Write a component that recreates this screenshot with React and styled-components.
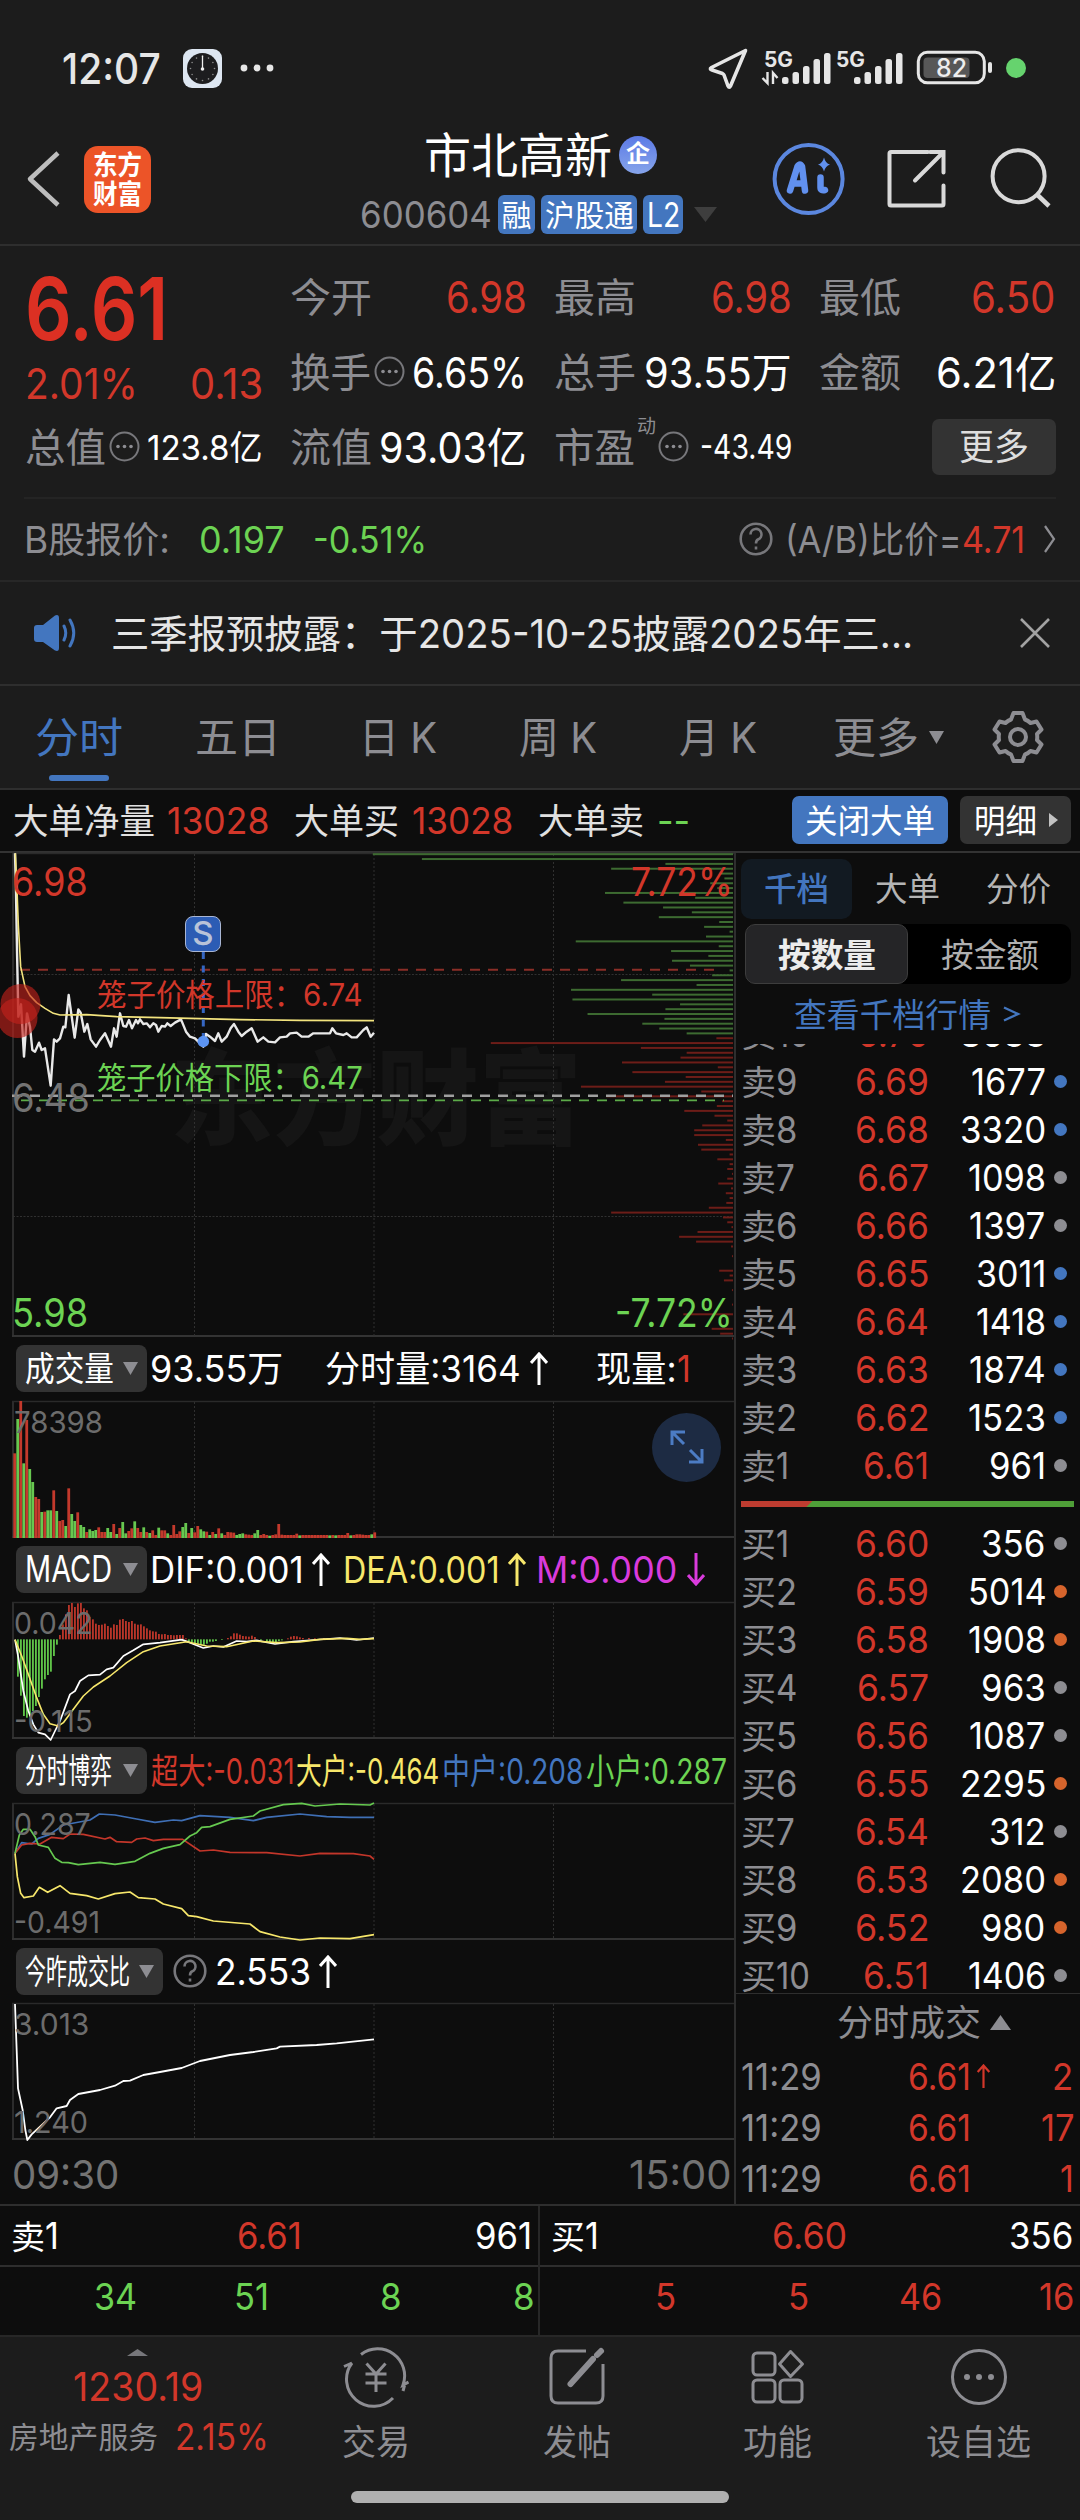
import React, { useLayoutEffect, useRef, useState } from "react";
import styled, { createGlobalStyle } from "styled-components";

const RED = "#d2372a";
const GREEN = "#6cd353";
const BLUE = "#4376bf";
const GREY = "#8d8d92";
const YELLOW = "#f7e76b";
const MAGENTA = "#d93bdc";
const PANEL = "#1c1c1c";
const LINE = "#2e2e2e";

const Global = createGlobalStyle`
  html, body { margin: 0; background: #0d0d0d; }
  * { box-sizing: border-box; }
  #root { font-family: Inter, "Noto Sans CJK SC", sans-serif; }
`;

/* ---------- text fitted to a fixed width ---------- */
const FitBox = styled.span`
  display: inline-block;
  flex: none;
  width: ${(p) => p.$w}px;
  white-space: pre;
  color: ${(p) => p.$c || "inherit"};
  font-size: ${(p) => (p.$s ? p.$s + "px" : "inherit")};
  font-weight: ${(p) => p.$b || "inherit"};
`;
const FitInner = styled.span`
  display: inline-block;
  transform-origin: 0 50%;
`;
const LATIN = /^[\x20-\x7f]+$/;
function Fit({ w, c, s, b, children }) {
  const ref = useRef(null);
  const [k, setK] = useState(1);
  useLayoutEffect(() => {
    if (ref.current && ref.current.offsetWidth) setK(w / ref.current.offsetWidth);
  }, [w, children]);
  const size = s && LATIN.test(children) ? s * 0.98 : s;
  return (
    <FitBox $w={w} $c={c} $s={size} $b={b}>
      <FitInner ref={ref} style={{ transform: `translateY(0.7px) scaleX(${k})` }}>{children}</FitInner>
    </FitBox>
  );
}

const ADVANCE = { 1: 0.36, 7: 0.52, ".": 0.25, ":": 0.26 };
const numWidth = (t, size) =>
  [...String(t)].reduce((a, ch) => a + (ADVANCE[ch] || 0.567) * size, 0);
const Num = ({ size, c, children }) => (
  <Fit w={numWidth(children, size)} s={size} c={c}>{children}</Fit>
);

/* ---------- page ---------- */
const Page = styled.div`
  width: 1080px;
  height: 2520px;
  background: #0d0d0d;
  color: #fff;
  display: flex;
  flex-direction: column;
  overflow: hidden;
  line-height: 1.1;
`;

/* ---------- status bar ---------- */
const Status = styled.div`
  height: 120px;
  padding: 17px 53px 0 62px;
  background: ${PANEL};
  display: flex;
  align-items: center;
  color: #e6e6e6;
`;
const StatusIcons = styled.svg`
  margin-left: auto;
  display: block;
`;
const ClockIcon = styled.svg`
  margin-left: 22px;
`;
const MoreDots = styled.svg`
  margin-left: 17px;
`;

/* ---------- header ---------- */
const Header = styled.header`
  height: 127px;
  background: ${PANEL};
  border-bottom: 2px solid ${LINE};
  display: flex;
`;
const HeaderLeft = styled.div`
  width: 360px;
  display: flex;
  align-items: center;
  padding: 0 0 6px 26px;
  gap: 22px;
`;
const Logo = styled.div`
  width: 67px;
  height: 67px;
  border-radius: 14px;
  background: #ec5428;
  font-weight: 700;
  line-height: 29px;
  font-size: 27px;
  display: flex;
  flex-direction: column;
  align-items: center;
  justify-content: center;
`;
const HeaderMid = styled.div`
  width: 410px;
  display: flex;
  flex-direction: column;
`;
const TitleRow = styled.div`
  height: 71px;
  padding-left: 64px;
  display: flex;
  align-items: center;
  gap: 7px;
  font-size: 48px;
`;
const Qi = styled.span`
  width: 38px;
  height: 38px;
  border-radius: 50%;
  background: linear-gradient(#5c7ae6, #86a4ea);
  font-size: 24px;
  font-weight: 700;
  line-height: 36px;
  text-align: center;
`;
const CodeRow = styled.div`
  height: 47px;
  display: flex;
  align-items: center;
  gap: 6px;
  font-size: 37px;
  color: ${GREY};
`;
const Badge = styled.span`
  height: 39px;
  border-radius: 6px;
  background: ${BLUE};
  color: #fff;
  font-size: 30px;
  line-height: 38px;
  padding: 0 3.5px;
`;
const HeaderRight = styled.div`
  display: flex;
  align-items: center;
  padding-bottom: 6px;
`;

/* ---------- quote ---------- */
const Quote = styled.section`
  height: 251px;
  background: ${PANEL};
  padding: 13px 24px 0 25px;
`;
const QuoteGrid = styled.div`
  display: grid;
  grid-template-columns: repeat(4, 237.5px);
  grid-template-rows: repeat(3, 75px);
  column-gap: 27px;
`;
const PriceBlock = styled.div`
  grid-row: span 2;
  display: flex;
  flex-direction: column;
  padding-top: 12px;
`;
const BigPrice = styled.div`
  height: 73px;
  line-height: 73px;
  font-weight: 500;
  color: #dc3023;
`;
const Spread = styled.div`
  display: flex;
  align-items: center;
  justify-content: space-between;
  height: 78px;
  flex: none;
`;
const Cell = styled.div`
  display: flex;
  align-items: center;
  justify-content: space-between;
  height: 75px;
`;
const CellLabel = styled.span`
  display: flex;
  align-items: center;
  gap: 3px;
  color: ${GREY};
`;
const Sup = styled.sup`
  font-size: 19px;
  align-self: flex-start;
  margin: -8px -1px 0 -1px;
  line-height: 20px;
`;
const MoreButton = styled.div`
  margin-left: auto;
  width: 124px;
  height: 56px;
  border-radius: 7px;
  background: #333;
  color: #dedede;
  display: flex;
  align-items: center;
  justify-content: center;
`;
const BRow = styled.section`
  height: 84px;
  margin: 0;
  padding: 0 24px 0 24px;
  background: ${PANEL};
  border-bottom: 2px solid #272727;
  display: flex;
  align-items: center;
  color: ${GREY};
`;
const QuoteRule = styled.div`
  height: 2px;
  flex: none;
  background: linear-gradient(90deg, ${PANEL} 24px, #242424 24px, #242424 1056px, ${PANEL} 1056px);
`;
const Push = styled.span`
  margin-left: ${(p) => (p.$x === undefined ? "auto" : p.$x + "px")};
  display: inline-flex;
  align-items: center;
`;

/* ---------- news ---------- */
const News = styled.section`
  height: 104px;
  background: ${PANEL};
  border-bottom: 2px solid ${LINE};
  display: flex;
  align-items: center;
  padding: 0 30px 0 33px;
  color: #e6e6e6;
`;

/* ---------- tabs ---------- */
const Tabs = styled.nav`
  height: 104px;
  background: ${PANEL};
  border-bottom: 2px solid ${LINE};
  display: flex;
  color: ${GREY};
`;
const Tab = styled.div`
  width: 160px;
  display: flex;
  flex-direction: column;
  align-items: center;
  padding-top: 28px;
  color: ${(p) => (p.$on ? BLUE : GREY)};
  &:first-child {
    width: 158px;
  }
  &::after {
    content: "";
    margin-top: 15px;
    width: 60px;
    height: 6px;
    border-radius: 3px;
    background: ${(p) => (p.$on ? BLUE : "transparent")};
  }
`;
const MoreTab = styled.div`
  margin-left: 35px;
  width: 152px;
  display: flex;
  gap: 10px;
  padding-top: 27px;
  height: 76px;
  align-items: center;
`;
const GearBox = styled.div`
  padding-top: 24px;
  margin-left: 6px;
`;

/* ---------- big orders ---------- */
const Orders = styled.div`
  height: 63px;
  display: flex;
  align-items: center;
  padding: 0 9px 0 13px;
  border-bottom: 2px solid #333;
  color: #e0e0e0;
`;
const Pill = styled.div`
  height: 48px;
  width: ${(p) => p.$w}px;
  background: ${(p) => (p.$blue ? BLUE : "#333")};
  border-radius: 7px;
  display: flex;
  align-items: center;
  justify-content: center;
  gap: 12px;
  color: #fff;
  margin-left: ${(p) => p.$ml};
`;

/* ---------- main split ---------- */
const Main = styled.div`
  display: flex;
  height: 1353px;
  border-bottom: 2px solid ${LINE};
`;
const Left = styled.div`
  width: 736px;
  border-right: 2px solid ${LINE};
  display: flex;
  flex-direction: column;
`;
const ChartBox = styled.div`
  position: relative;
  height: ${(p) => p.$h}px;
  flex: none;
`;
const ChartSvg = styled.svg`
  position: relative;
  display: block;
  overflow: visible;
`;
const Mark = styled.div`
  position: absolute;
  line-height: 40px;
  height: 40px;
  margin-top: -20px;
  left: ${(p) => p.$x}px;
  top: ${(p) => p.$y}px;
  white-space: nowrap;
`;
const Watermark = styled.div`
  position: absolute;
  left: 170px;
  top: 190px;
  line-height: 110px;
  font-weight: 900;
  color: #151515;
`;
const SellBadge = styled.div`
  position: absolute;
  left: 185px;
  top: 63px;
  width: 36px;
  height: 36px;
  border: 1.5px solid #a9b6d4;
  border-radius: 8px;
  background: #2c5cb4;
  color: #b9c3d8;
  font-size: 33px;
  font-weight: 500;
  line-height: 33px;
  text-align: center;
`;
const ExpandButton = styled.div`
  position: absolute;
  left: 652px;
  top: 12px;
  width: 69px;
  height: 69px;
  border-radius: 50%;
  background: #1d2b43;
  display: flex;
  align-items: center;
  justify-content: center;
`;
const IndicatorRow = styled.div`
  height: ${(p) => p.$h || 64}px;
  padding: 8px 0 0 16px;
  display: flex;
`;
const Picker = styled.div`
  width: ${(p) => p.$w || 131}px;
  height: 47px;
  border-radius: 8px;
  background: #333;
  display: flex;
  align-items: center;
  justify-content: space-between;
  padding: 0 9px;
  font-size: 34px;
`;
const Values = styled.div`
  height: 47px;
  display: flex;
  align-items: center;
  font-size: 36.5px;
`;
const Axis = styled.div`
  flex: 1;
  display: flex;
  justify-content: space-between;
  align-items: center;
  padding: 5px 2px 0 12px;
  color: #737373;
`;

/* ---------- order book ---------- */
const Right = styled.div`
  width: 344px;
  display: flex;
  flex-direction: column;
`;
const BookTabs = styled.div`
  height: 72px;
  padding: 6px 6px 0 5px;
  display: flex;
`;
const BookTab = styled.div`
  width: 111px;
  height: 60px;
  border-radius: 10px;
  display: flex;
  align-items: center;
  justify-content: center;
  color: ${(p) => (p.$on ? BLUE : "#b4b4b4")};
  background: ${(p) => (p.$on ? "#121a22" : "transparent")};
  font-weight: ${(p) => (p.$on ? 500 : 400)};
`;
const Segment = styled.div`
  margin-left: 9px;
  width: 326px;
  height: 60px;
  border-radius: 10px;
  background: #000;
  display: flex;
`;
const SegItem = styled.div`
  width: 163px;
  border-radius: 10px;
  border: 1.5px solid ${(p) => (p.$on ? "#3d3d3d" : "transparent")};
  background: ${(p) => (p.$on ? "#252527" : "transparent")};
  color: ${(p) => (p.$on ? "#ececec" : "#b0b0b0")};
  font-weight: ${(p) => (p.$on ? 700 : 400)};
  display: flex;
  align-items: center;
  justify-content: center;
`;
const BookLink = styled.div`
  height: 60px;
  display: flex;
  align-items: center;
  padding-left: 58px;
  color: ${BLUE};
`;
const BookList = styled.div`
  height: ${(p) => p.$h}px;
  overflow: hidden;
  display: flex;
  flex-direction: column;
  justify-content: ${(p) => (p.$end ? "flex-end" : "flex-start")};
`;
const BookLine = styled.div`
  height: 48px;
  flex: none;
  display: grid;
  grid-template-columns: 80px 108px 117px 22px;
  align-items: center;
  padding-left: 5px;
  color: ${GREY};
`;
const RightCell = styled.span`
  display: flex;
  justify-content: flex-end;
  color: ${(p) => p.$c};
`;
const Dot = styled.i`
  width: 13px;
  height: 13px;
  border-radius: 50%;
  background: ${(p) => p.$c};
  margin-left: 8px;
`;
const RatioBar = styled.div`
  height: 6px;
  margin: 11px 6px 13px 5px;
  background: linear-gradient(135deg, #be3c30 50px, #4f9f38 51px);
`;
const TradesHead = styled.div`
  height: 58px;
  border-top: 1.5px solid ${LINE};
  display: flex;
  align-items: center;
  padding-left: 101px;
  gap: 9px;
  color: ${GREY};
`;
const Trade = styled.div`
  height: 51px;
  display: grid;
  grid-template-columns: 167px 64px 24px 1fr;
  align-items: center;
  padding: 0 6px 0 5px;
  color: ${RED};
`;

/* ---------- best quotes ---------- */
const Best = styled.div`
  height: 131px;
  display: flex;
  flex: none;
  border-bottom: 2px solid #272727;
`;
const BestHalf = styled.div`
  width: 540px;
  border-right: 2px solid #272727;
  &:last-child {
    border-right: 0;
  }
`;
const BestTop = styled.div`
  height: 61px;
  border-bottom: 2px solid ${LINE};
  display: grid;
  grid-template-columns: 180px 1fr 180px;
  align-items: center;
  padding: 0 6px 0 11px;
`;
const BestQueue = styled.div`
  height: 60px;
  display: grid;
  grid-template-columns: 137px repeat(3, 132.5px);
  align-items: center;
`;

/* ---------- bottom nav ---------- */
const Bottom = styled.footer`
  height: 184px;
  background: ${PANEL};
  display: flex;
  flex-direction: column;
  align-items: center;
`;
const BottomItems = styled.div`
  display: flex;
  width: 1080px;
  height: 154px;
`;
const Sector = styled.div`
  width: 275px;
  display: flex;
  flex-direction: column;
  align-items: center;
  padding-top: 12px;
`;
const SectorPrice = styled.div`
  height: 52px;
  margin-top: 5px;
  display: flex;
  align-items: center;
`;
const SectorName = styled.div`
  height: 48px;
  width: 275px;
  padding-left: 9px;
  display: flex;
  align-items: center;
  gap: 17px;
  color: ${GREY};
`;
const NavItem = styled.div`
  width: 201px;
  display: flex;
  flex-direction: column;
  align-items: center;
  padding-top: 9px;
  gap: 14px;
  color: ${GREY};
`;
const HomeBar = styled.div`
  width: 378px;
  height: 12px;
  border-radius: 6px;
  background: #b0b0b0;
`;

/* ---------- small icons ---------- */
const Ellipsis = ({ r = 14.5 }) => (
  <svg width="31" height="31" viewBox="-15.5 -15.5 31 31" fill="none">
    <circle r={r - 0.5} stroke="#77777b" strokeWidth="2" />
    {[-6.5, 0, 6.5].map((x) => <circle key={x} cx={x} r="1.8" fill="#8d8d92" />)}
  </svg>
);
const Question = () => (
  <svg width="34" height="34" viewBox="-17 -17 34 34" fill="none" stroke="#77777b" strokeWidth="2.6">
    <circle r="15.3" />
    <path d="M-5.5-4.5A5.5 5.5 0 1 1 2 0.5Q0 1.6 0 4.5" />
    <path d="M0 7.5V10.5" />
  </svg>
);
const Caret = ({ w = 14, h = 13, c = GREY, up }) => (
  <svg width={w} height={h} viewBox="0 0 10 10" preserveAspectRatio="none">
    <path d={up ? "M0 10L5 0L10 10Z" : "M0 0L5 10L10 0Z"} fill={c} />
  </svg>
);
const ArrowSvg = styled.svg`
  margin-left: ${(p) => p.$ml ?? 10}px;
  flex: none;
`;
const Arrow = ({ c, down, ml, w = 18, h = 33 }) => (
  <ArrowSvg $ml={ml} width={w} height={h} viewBox="0 0 18 33" fill="none" stroke={c} strokeWidth="3">
    <path d={down ? "M9 0V31M1 22L9 31L17 22" : "M9 33V2M1 11L9 2L17 11"} />
  </ArrowSvg>
);

/* ---------- chart data, in thirds of a pixel ---------- */
const THIRD = 1 / 3;
const PRICE = "45,10 48,130 51,300 55,500 63,463 72,620 81,490 90,530 97,600 105,605 117,578 125,600 135,595 152,707 162,568 170,575 180,565 190,530 196,532 206,435 224,563 235,478 242,488 253,545 262,522 272,568 288,590 300,570 315,550 333,590 342,535 350,560 360,490 370,528 378,530 387,510 396,535 408,510 414,520 420,508 430,522 440,520 450,532 460,520 468,525 475,545 485,528 495,530 502,520 512,528 525,518 543,508 558,545 570,560 585,565 610,590 618,552 630,560 645,573 655,550 665,575 680,560 692,535 702,522 715,545 725,558 740,545 755,535 773,575 790,562 805,575 825,577 840,562 860,560 870,550 890,548 905,560 925,560 940,550 990,550 997,535 1008,550 1030,555 1040,550 1055,562 1070,562 1090,540 1100,532 1112,560 1122,548";
const AVG = "46,10 51,120 55,225 62,350 75,410 90,437 110,458 135,475 160,490 180,495 260,494 350,500 480,503 600,506 720,509 900,511 1122,512";
const DIF = "45,716 55,770 70,870 85,930 100,970 115,995 135,1000 152,1017 165,990 180,960 195,920 210,880 225,870 240,840 265,823 300,821 320,805 340,800 370,765 400,748 430,730 480,725 545,716 570,725 610,741 640,735 670,738 710,720 740,722 770,718 825,729 880,722 940,717 1020,711 1070,717 1122,711";
const DEA = "45,716 65,765 85,820 110,890 130,940 150,968 175,975 190,965 220,925 250,885 280,858 330,825 380,785 430,752 480,735 560,722 620,735 680,737 760,720 830,725 900,723 960,715 1040,712 1080,715 1122,713";
const SMALL = "45,160 58,105 70,88 90,88 105,110 115,135 145,142 165,175 185,187 205,188 235,194 300,187 345,193 405,184 450,160 490,145 540,134 570,108 590,98 605,82 630,80 690,58 760,48 780,33 850,14 905,10 945,18 1020,12 1110,15 1122,9";
const MID = "45,160 65,128 95,132 115,115 150,103 190,75 270,60 298,42 345,45 410,57 465,67 520,60 545,62 600,47 690,52 760,62 800,52 900,42 980,50 1050,52 1122,52";
const HUGE = "45,160 65,135 90,130 120,132 155,112 190,116 210,102 250,103 315,117 330,112 350,125 395,127 410,117 435,114 460,122 490,118 548,118 600,153 640,150 690,157 800,158 900,168 960,160 1060,161 1110,168 1122,178";
const LARGE = "45,160 52,230 62,280 72,293 100,288 118,262 143,277 180,257 210,280 260,287 295,297 345,281 390,276 415,293 465,297 490,312 545,326 565,347 590,350 640,363 750,372 780,395 840,411 900,420 960,414 1050,416 1122,404";
const RATIO = "45,612 50,750 54,865 68,930 76,990 82,1020 95,1003 120,980 150,952 170,925 200,918 210,900 235,882 300,870 345,857 370,843 390,842 430,825 480,816 545,804 600,783 690,765 760,756 830,745 840,740 950,735 1010,730 1122,718";

const VOLUME = ("160r 57g 3r 190g 60r 207g 246g 291r 297r 336g 335r 331g 331g 271r 333g 363r 360r 378g 265r 342g 363g 337r 375g 381g 396r 388g 393g 390g 382r 396r 396r 384g 396g 372r 402g 384r 366g 400g 393r 385r 364g 384r 396r 382g 396r 399g 391r 405r 383g 391r 391r 400g 405r 375r 402r 394r 381g 369g 399r 384g 397r 378r 388g 394g 395r 405g 396r 402g 385r 400g 405r 396r 397r 398r 405g 402g 400g 403r 404r 405r 400g 390g 405r 402r 405r 407g 405r 403r 372r 404r 405r 405r 405r 405r 401r 406g 405r 405r 405r 405r 405r 405r 405r 405r 405r 406g 405r 406g 405r 405r 405r 399r 406g 405r 403r 403r 404r 405r 405r 403g 397r").split(" ");

const MACD_BARS = "1:827 2:884 3:945 4:950 5:945 6:930 7:915 8:888 9:863 10:835 11:822 12:812 13:765 14:731 15:702 16:670 17:640 18:612 19:606 20:618 21:607 22:606 23:622 24:628 25:648 26:655 27:668 28:672 29:671 30:668 31:675 32:680 33:670 34:672 35:656 36:654 37:660 38:663 39:660 40:668 41:671 42:670 43:676 44:682 45:688 46:691 47:692 48:699 49:700 50:699 51:702 52:702 53:703 54:702 55:702 56:702 57:712 58:720 59:724 60:726 61:728 62:731 63:731 64:728 65:722 66:722 67:720 69:717 71:711 72:706 73:697 74:697 75:701 76:705 77:706 78:707 79:704 80:708 82:718 84:720 85:724 86:725 87:723 88:720 89:718 91:712 92:707 93:705 94:706 95:709 96:711 98:711 100:712 103:711 106:711".split(" ").map((t) => t.split(":").map(Number));

/* volume by price: left edge of each bar, top row first */
const PROFILE = [790, 894, 1410, 1295, 1525, 1535, 1505, 1520, 1282, 1473, 1321, 1405, 1466, 1396, 1524, 1492, 1546, 1496, 1220, 1523, 1422, 1501, 1424, 1462, 1546, 1509, 1316, 1476, 1210, 1382, 1213, 1441, 1410, 1245, 1408, 1361, 1397, 1455, 1518, 1040, 1358, 1455, 1442, 1318, 1521, 1340, 1453, 1409, 1231, 1486, 1285, 1530, 1519, 1450, 1514, 1541, 1488, 1471, 1471, 1538, 1479, 1486, 1546, 1520, 1546, 1541, 1551, 1541, 1522, 1549, 1538, 1546, 1539, 1502, 1295, 1532, 1541, 1550, 1478, 1439, 1475, 1549, 0, 1551, 0, 0, 1524, 1546, 1534, 0, 1551, 0, 0, 1551, 0, 1448, 0, 0, 1508, 1526, 1551];

const Frame = ({ h, main }) => (
  <g fill="none">
    <path d={`M13 0V${h - 1}`} stroke="#2c2c2c" strokeWidth="2" />
    <path d={`M12 0.5H734`} stroke="#2a2a2a" strokeWidth="1.5" />
    <path d={`M12 ${h - 1}H734`} stroke="#333" strokeWidth="2" />
    <path d={`M194.5 1V${h - 1}M374 1V${h - 1}M553.5 1V${h - 1}`} stroke="#303030" strokeDasharray="2 2" />
    {main && <path d="M13 121.5H734M13 363.5H734" stroke="#303030" strokeDasharray="2 1.5" />}
  </g>
);
const Line = ({ pts, c, w = 2 }) => (
  <polyline points={pts} fill="none" stroke={c} strokeWidth={w * 3} strokeLinejoin="round" />
);

function PriceChart() {
  return (
    <ChartBox $h={484}>
      <Watermark><Fit w={412} s={104}>东方财富</Fit></Watermark>
      <ChartSvg width="734" height="484" viewBox="0 0 734 484">
        <Frame h={484} main />
        {PROFILE.map((x, i) => {
          if (!x) return null;
          const left = x / 2.119;
          return <rect key={i} x={left} y={0.2 + i * 4.843} width={733 - left} height="2" fill={i < 38 ? "#3d6b31" : "#6d1d18"} />;
        })}
        <path d="M20 116.8H722" stroke="#8a2e27" strokeWidth="2" strokeDasharray="10 8" />
        <path d="M12 242.7H733" stroke="#a0a0a0" strokeWidth="2.6" strokeDasharray="10 8" />
        <path d="M21 247.4H724" stroke="#5cab49" strokeWidth="1.8" strokeDasharray="10 8" />
        <g transform={`translate(0 -3) scale(${THIRD})`}>
          <Line pts={PRICE} c="#e9e9e9" w={2.4} />
          <Line pts={AVG} c="#f3e47e" w={1.6} />
        </g>
        <circle cx="20.5" cy="151" r="20" fill="#c3221b" opacity=".62" />
        <circle cx="17.5" cy="165" r="20" fill="#c3221b" opacity=".62" />
        <path d="M203.3 99V186" stroke="#3566c2" strokeWidth="3" strokeDasharray="7 6.5" />
        <circle cx="203.3" cy="188.5" r="5.8" fill="#5b93f2" />
      </ChartSvg>
      <SellBadge>S</SellBadge>
      <Mark $x={12} $y={28}><Fit w={76} s={40} c={RED}>6.98</Fit></Mark>
      <Mark $x={631} $y={28}><Fit w={102} s={40} c={RED}>7.72%</Fit></Mark>
      <Mark $x={12} $y={244}><Fit w={78} s={40} c="#737373">6.48</Fit></Mark>
      <Mark $x={12} $y={459}><Fit w={76} s={40} c={GREEN}>5.98</Fit></Mark>
      <Mark $x={615} $y={459}><Fit w={118} s={40} c={GREEN}>-7.72%</Fit></Mark>
      <Mark $x={97} $y={141}><Fit w={265} s={31} c={RED}>笼子价格上限：6.74</Fit></Mark>
      <Mark $x={97} $y={224}><Fit w={266} s={31} c={GREEN}>笼子价格下限：6.47</Fit></Mark>
    </ChartBox>
  );
}

function SubChart({ hi, lo, hiW, loW, children, extra }) {
  return (
    <ChartBox $h={137}>
      <ChartSvg width="734" height="137" viewBox="0 0 734 137">
        <Frame h={137} />
        {children}
      </ChartSvg>
      <Mark $x={14} $y={20}><Fit w={hiW} s={31} c="#6c6c6c">{hi}</Fit></Mark>
      {lo && <Mark $x={14} $y={118}><Fit w={loW} s={31} c="#6c6c6c">{lo}</Fit></Mark>}
      {extra}
    </ChartBox>
  );
}

function Charts() {
  return (
    <Left>
      <PriceChart />
      <IndicatorRow>
        <Picker><Fit w={89}>成交量</Fit><Caret w={15} h={13} /></Picker>
        <Values>
          <Push $x={3}><Fit w={133}>93.55万</Fit></Push>
          <Push $x={42}><Fit w={196}>分时量:3164</Fit><Arrow c="#fff" ml={9} /></Push>
          <Push $x={48}><Fit w={81}>现量:</Fit><Fit w={14} c={RED}>1</Fit></Push>
        </Values>
      </IndicatorRow>
      <SubChart hi="78398" hiW={89} extra={
        <ExpandButton>
          <svg width="34" height="34" viewBox="0 0 34 34" fill="none" stroke="#4c7cc4" strokeWidth="3">
            <path d="M2 15V2H15M2 2L14 14M32 19V32H19M32 32L20 20" />
          </svg>
        </ExpandButton>
      }>
        <g transform={`translate(0 -1) scale(${THIRD})`}>
          {VOLUME.map((t, i) => {
            const y = parseInt(t, 10);
            return <rect key={i} x={40 + i * 9} y={y} width="8.4" height={414 - y} fill={t.endsWith("r") ? "#c3392c" : "#67c750"} />;
          })}
        </g>
      </SubChart>
      <IndicatorRow>
        <Picker><Fit w={87} s={37}>MACD</Fit><Caret w={15} h={13} /></Picker>
        <Values>
          <Push $x={3}><Fit w={154}>DIF:0.001</Fit><Arrow c="#fff" ml={8} /></Push>
          <Push $x={13}><Fit w={157} c={YELLOW}>DEA:0.001</Fit><Arrow c={YELLOW} ml={8} /></Push>
          <Push $x={10}><Fit w={141} c={MAGENTA}>M:0.000</Fit><Arrow c={MAGENTA} down /></Push>
        </Values>
      </IndicatorRow>
      <SubChart hi="0.042" hiW={79} lo="-0.115" loW={79}>
        <g transform={`translate(0 -201) scale(${THIRD})`}>
          {MACD_BARS.map(([i, y]) => (
            <rect key={i} x={42 + i * 9} y={Math.min(715, y)} width="5.5" height={Math.abs(715 - y)} fill={y > 715 ? "#5fc348" : "#b93529"} />
          ))}
          <Line pts={DIF} c="#fff" w={1.7} />
          <Line pts={DEA} c={YELLOW} w={1.6} />
        </g>
      </SubChart>
      <IndicatorRow>
        <Picker><Fit w={87}>分时博弈</Fit><Caret w={15} h={13} /></Picker>
        <Values>
          <Push $x={4}><Fit w={144} s={35} c={RED}>超大:-0.031</Fit></Push>
          <Push $x={1}><Fit w={143} s={35} c={YELLOW}>大户:-0.464</Fit></Push>
          <Push $x={3}><Fit w={141} s={35} c={BLUE}>中户:0.208</Fit></Push>
          <Push $x={3}><Fit w={141} s={35} c={GREEN}>小户:0.287</Fit></Push>
        </Values>
      </IndicatorRow>
      <SubChart hi="0.287" hiW={77} lo="-0.491" loW={86}>
        <g transform={`translate(0 -3) scale(${THIRD})`}>
          <Line pts={MID} c="#3f6fb5" w={1.7} />
          <Line pts={HUGE} c="#c3362a" w={1.7} />
          <Line pts={SMALL} c="#66c950" w={1.7} />
          <Line pts={LARGE} c={YELLOW} w={1.7} />
        </g>
      </SubChart>
      <IndicatorRow $h={63}>
        <Picker $w={147}><Fit w={105}>今昨成交比</Fit><Caret w={15} h={13} /></Picker>
        <Values>
          <Push $x={10}><Question /></Push>
          <Push $x={8}><Fit w={96} s={38}>2.553</Fit><Arrow c="#fff" ml={8} /></Push>
        </Values>
      </IndicatorRow>
      <SubChart hi="3.013" hiW={75} lo="1.240" loW={74}>
        <g transform={`translate(0 -203) scale(${THIRD})`}>
          <Line pts={RATIO} c="#fff" w={1.8} />
        </g>
      </SubChart>
      <Axis>
        <Fit w={107} s={40}>09:30</Fit>
        <Fit w={103} s={40}>15:00</Fit>
      </Axis>
    </Left>
  );
}

/* ---------- order book ---------- */
const ORANGE = "#d6642c";
const DG = "#8d8d92";
const SELLS = [
  [10, "6.70", 3688, DG], [9, "6.69", 1677, BLUE], [8, "6.68", 3320, BLUE], [7, "6.67", 1098, DG],
  [6, "6.66", 1397, DG], [5, "6.65", 3011, BLUE], [4, "6.64", 1418, BLUE], [3, "6.63", 1874, BLUE],
  [2, "6.62", 1523, BLUE], [1, "6.61", 961, DG],
];
const BUYS = [
  [1, "6.60", 356, DG], [2, "6.59", 5014, ORANGE], [3, "6.58", 1908, ORANGE], [4, "6.57", 963, DG],
  [5, "6.56", 1087, DG], [6, "6.55", 2295, ORANGE], [7, "6.54", 312, DG], [8, "6.53", 2080, ORANGE],
  [9, "6.52", 980, ORANGE], [10, "6.51", 1406, DG],
];
const Level = ({ side, row: [n, price, vol, dot] }) => (
  <BookLine>
    <span><Fit w={35} s={34}>{side}</Fit><Num size={37}>{String(n)}</Num></span>
    <RightCell $c={RED}><Num size={38}>{price}</Num></RightCell>
    <RightCell $c="#fff"><Num size={38}>{String(vol)}</Num></RightCell>
    <Dot $c={dot} />
  </BookLine>
);

function Book() {
  return (
    <Right>
      <BookTabs>
        <BookTab $on><Fit w={65} s={33}>千档</Fit></BookTab>
        <BookTab><Fit w={65} s={33}>大单</Fit></BookTab>
        <BookTab><Fit w={65} s={33}>分价</Fit></BookTab>
      </BookTabs>
      <Segment>
        <SegItem $on><Fit w={98} s={33}>按数量</Fit></SegItem>
        <SegItem><Fit w={98} s={33}>按金额</Fit></SegItem>
      </Segment>
      <BookLink>
        <Fit w={197} s={33}>查看千档行情</Fit>
        <Push $x={12}>
          <svg width="18" height="16" viewBox="0 0 18 16" fill="none" stroke={BLUE} strokeWidth="2.4"><path d="M1 1.500L15 8L1 14.500" /></svg>
        </Push>
      </BookLink>
      <BookList $h={446} $end>{SELLS.map((r) => <Level key={r[0]} side="卖" row={r} />)}</BookList>
      <RatioBar />
      <BookList $h={474}>{BUYS.map((r) => <Level key={r[0]} side="买" row={r} />)}</BookList>
      <TradesHead><Fit w={144} s={36}>分时成交</Fit><Caret w={21} h={15} up /></TradesHead>
      {[["2", true], ["17"], ["1"]].map(([v, up]) => (
        <Trade key={v}>
          <Fit w={81} s={38} c={GREY}>11:29</Fit>
          <Fit w={63} s={38}>6.61</Fit>
          {up ? <Arrow c={RED} ml={3} w={17} h={24} /> : <span />}
          <RightCell $c={RED}><Num size={38}>{v}</Num></RightCell>
        </Trade>
      ))}
    </Right>
  );
}

/* ---------- status icons ---------- */
const BARS = [[18, 77], [28.5, 72], [39, 66], [49.5, 59], [60, 53]];
const Signal = ({ x }) => BARS.map(([dx, y]) => (
  <rect key={dx} x={x + dx} y={y} width="6.5" height={84 - y} rx="2.5" fill="#e6e6e6" />
));

export default function App() {
  return (
    <>
      <Global />
      <Page>
        <Status>
          <Fit w={99} s={43} b={500}>12:07</Fit>
          <ClockIcon width="39" height="39" viewBox="0 0 39 39">
            <rect width="39" height="39" rx="9" fill="#dde6f1" />
            <circle cx="19.5" cy="19.5" r="15.5" fill="#1d1d1f" />
            {Array.from({ length: 12 }, (_, i) => (
              <circle key={i} cx={19.5 + 12 * Math.sin(i * Math.PI / 6)} cy={19.5 - 12 * Math.cos(i * Math.PI / 6)} r=".8" fill="#8c8c8c" />
            ))}
            <path d="M19.5 6.5V21" stroke="#eee" strokeWidth="1.3" />
            <circle cx="19.5" cy="20" r="1.8" fill="#eee" />
          </ClockIcon>
          <MoreDots width="36" height="8" viewBox="0 0 36 8" fill="#e6e6e6">
            <circle cx="5" cy="4" r="3.4" /><circle cx="18" cy="4" r="3.4" /><circle cx="31" cy="4" r="3.4" />
          </MoreDots>
          <StatusIcons width="320" height="44" viewBox="707 46 320 44">
            <path d="M745.5 50.5L711.5 67.5Q709 69 712 70L722.5 73.5Q723.5 74 724 75L728 86Q729.3 88.5 730.5 86Z" fill="none" stroke="#e6e6e6" strokeWidth="3.6" strokeLinejoin="round" />
            <text x="764" y="66.5" fontSize="21" fontWeight="700" fill="#e6e6e6" textLength="29" lengthAdjust="spacingAndGlyphs">5G</text>
            <path d="M767.5 72V83L762.5 78M773 84V73L777.5 78" fill="none" stroke="#e6e6e6" strokeWidth="2.4" />
            <Signal x={764} />
            <text x="836" y="66.5" fontSize="21" fontWeight="700" fill="#e6e6e6" textLength="29" lengthAdjust="spacingAndGlyphs">5G</text>
            <Signal x={836} />
            <rect x="918.3" y="52.3" width="66" height="30.5" rx="9" fill="none" stroke="#e6e6e6" strokeWidth="3" />
            <rect x="923.5" y="57.5" width="46" height="20.5" rx="4" fill="#575757" />
            <rect x="988" y="62" width="4" height="11" rx="2" fill="#e6e6e6" />
            <text x="936" y="77" fontSize="25" fontWeight="500" fill="#ededed" textLength="31" lengthAdjust="spacingAndGlyphs">82</text>
            <circle cx="1016" cy="68" r="10" fill="#66d36e" />
          </StatusIcons>
        </Status>

        <Header>
          <HeaderLeft>
            <svg width="36" height="58" viewBox="0 0 36 58" fill="none" stroke="#bdbdbd" strokeWidth="4.5" strokeLinejoin="round">
              <path d="M32 3L4 29L32 55" />
            </svg>
            <Logo><Fit w={49}>东方</Fit><Fit w={49}>财富</Fit></Logo>
          </HeaderLeft>
          <HeaderMid>
            <TitleRow><Fit w={188}>市北高新</Fit><Qi>企</Qi></TitleRow>
            <CodeRow>
              <Fit w={132}>600604</Fit>
              <Badge><Fit w={30}>融</Fit></Badge>
              <Badge><Fit w={89}>沪股通</Fit></Badge>
              <Badge><Fit w={33} s={34}>L2</Fit></Badge>
              <Push $x={5}><Caret w={23} h={15} c="#3e3e3e" /></Push>
            </CodeRow>
          </HeaderMid>
          <HeaderRight>
            <svg width="310" height="76" viewBox="770 141.5 310 76" fill="none">
              <circle cx="808.6" cy="179.5" r="34" stroke="#5b87df" strokeWidth="4" />
              <g stroke="#6190ee" strokeLinecap="round" strokeLinejoin="round">
                <path d="M790 191L797.500 167Q800 163 802 167L805 191M794 184H804" strokeWidth="6.500" />
                <path d="M820.500 178V188Q820.500 191.500 825 190.500" strokeWidth="6.500" />
              </g>
              <path d="M824 158Q825.500 164 830 165Q825.500 166.500 824 172Q822.500 166.500 818 165Q822.500 164 824 158Z" fill="#6190ee" />
              <path d="M928 152.500H891Q889.500 152.500 889.500 154V204.500Q889.500 206 891 206H942Q943.500 206 943.500 204.500V186M943.500 173V152.500H930M942 154L915 181" stroke="#d9d9d9" strokeWidth="4" strokeLinecap="round" />
              <circle cx="1018.600" cy="176.700" r="26" stroke="#d9d9d9" strokeWidth="4" />
              <path d="M1037.500 195.500L1049 206.500" stroke="#d9d9d9" strokeWidth="4.500" />
            </svg>
          </HeaderRight>
        </Header>

        <Quote>
          <QuoteGrid>
            <PriceBlock>
              <BigPrice><Fit w={143} s={88} b={600}>6.61</Fit></BigPrice>
              <Spread><Fit w={113} s={43} c={RED}>2.01%</Fit><Fit w={73} s={43} c={RED}>0.13</Fit></Spread>
            </PriceBlock>
            <Cell><CellLabel><Fit w={82} s={40}>今开</Fit></CellLabel><Fit w={81} s={44} c={RED}>6.98</Fit></Cell>
            <Cell><CellLabel><Fit w={82} s={40}>最高</Fit></CellLabel><Fit w={81} s={44} c={RED}>6.98</Fit></Cell>
            <Cell><CellLabel><Fit w={82} s={40}>最低</Fit></CellLabel><Fit w={85} s={44} c={RED}>6.50</Fit></Cell>
            <Cell><CellLabel><Fit w={81} s={40}>换手</Fit><Ellipsis /></CellLabel><Fit w={115} s={43}>6.65%</Fit></Cell>
            <Cell><CellLabel><Fit w={82} s={40}>总手</Fit></CellLabel><Fit w={148} s={42}>93.55万</Fit></Cell>
            <Cell><CellLabel><Fit w={82} s={40}>金额</Fit></CellLabel><Fit w={120} s={42}>6.21亿</Fit></Cell>
            <Cell><CellLabel><Fit w={81} s={40}>总值</Fit><Ellipsis /></CellLabel><Fit w={116} s={34.5}>123.8亿</Fit></Cell>
            <Cell><CellLabel><Fit w={82} s={40}>流值</Fit></CellLabel><Fit w={148} s={42}>93.03亿</Fit></Cell>
            <Cell><CellLabel><Fit w={81} s={40}>市盈</Fit><Sup>动</Sup><Ellipsis /></CellLabel><Fit w={92} s={34}>-43.49</Fit></Cell>
            <Cell><MoreButton><Fit w={70} s={36}>更多</Fit></MoreButton></Cell>
          </QuoteGrid>
        </Quote>
        <QuoteRule />
        <BRow>
          <Fit w={146} s={36.5}>B股报价:</Fit>
          <Push $x={29}><Fit w={86} s={38} c={GREEN}>0.197</Fit></Push>
          <Push $x={28}><Fit w={114} s={38} c={GREEN}>-0.51%</Fit></Push>
          <Push><Question /></Push>
          <Push $x={12}><Fit w={177} s={36.5}>(A/B)比价=</Fit><Fit w={63} s={38} c={RED}>4.71</Fit></Push>
          <Push $x={19}>
            <svg width="12" height="28" viewBox="0 0 12 28" fill="none" stroke={GREY} strokeWidth="2.2"><path d="M1 1L10 14L1 27" /></svg>
          </Push>
        </BRow>

        <News>
          <svg width="46" height="38" viewBox="0 0 46 38" fill="none" stroke={BLUE} strokeWidth="3">
            <path d="M4 11H10L22 1.500Q26 0 26 4V34Q26 38 22 36.500L10 28H4Q1 28 1 25V14Q1 11 4 11Z" fill={BLUE} stroke="none" />
            <path d="M31 12Q34.500 19 31 26M37 6Q44.500 19 37 32" strokeLinecap="round" />
          </svg>
          <Push $x={32}><Fit w={802} s={39}>三季报预披露：于2025-10-25披露2025年三...</Fit></Push>
          <Push>
            <svg width="30" height="30" viewBox="0 0 30 30" stroke="#a2a2a2" strokeWidth="2.6"><path d="M1 1L29 29M29 1L1 29" /></svg>
          </Push>
        </News>

        <Tabs>
          <Tab $on><Fit w={88} s={42}>分时</Fit></Tab>
          <Tab><Fit w={86} s={42}>五日</Fit></Tab>
          <Tab><Fit w={78} s={42}>日 K</Fit></Tab>
          <Tab><Fit w={78} s={42}>周 K</Fit></Tab>
          <Tab><Fit w={78} s={42}>月 K</Fit></Tab>
          <MoreTab><Fit w={86} s={42}>更多</Fit><Caret w={15} h={13} /></MoreTab>
          <GearBox>
            <svg width="54" height="54" viewBox="-27 -27 54 54" fill="none" stroke={GREY} strokeWidth="4" strokeLinejoin="round">
              <path d="M-4.500 -24H4.500L7 -17.500Q10 -16.500 12.500 -14L18.500 -15.500L23.500 -7.500L19 -3Q19.500 0 19 3L23.500 7.500L18.500 15.500L12.500 14Q10 16.500 7 17.500L4.500 24H-4.500L-7 17.500Q-10 16.500 -12.500 14L-18.500 15.500L-23.500 7.500L-19 3Q-19.500 0 -19 -3L-23.500 -7.500L-18.500 -15.500L-12.500 -14Q-10 -16.500 -7 -17.500Z" />
              <circle r="8" />
            </svg>
          </GearBox>
        </Tabs>

        <Orders>
          <Fit w={142} s={35}>大单净量</Fit>
          <Push $x={12}><Fit w={102} s={38} c={RED}>13028</Fit></Push>
          <Push $x={25}><Fit w={105} s={35}>大单买</Fit></Push>
          <Push $x={13}><Fit w={101} s={38} c={RED}>13028</Fit></Push>
          <Push $x={25}><Fit w={106} s={35}>大单卖</Fit></Push>
          <Push $x={13}><Fit w={33} s={38} c={GREEN}>--</Fit></Push>
          <Pill $w={156} $blue $ml="auto"><Fit w={130} s={33}>关闭大单</Fit></Pill>
          <Pill $w={111} $ml="12px"><Fit w={63} s={33}>明细</Fit>
            <svg width="9" height="14" viewBox="0 0 9 14"><path d="M0 0L9 7L0 14Z" fill="#c2c2c2" /></svg>
          </Pill>
        </Orders>

        <Main>
          <Charts />
          <Book />
        </Main>

        <Best>
          <BestHalf>
            <BestTop>
              <span><Fit w={34} s={33}>卖</Fit><Num size={38}>1</Num></span>
              <Push $x={46}><Fit w={65} s={38} c={RED}>6.61</Fit></Push>
              <RightCell><Num size={38}>961</Num></RightCell>
            </BestTop>
            <BestQueue>
              {["34", "51", "8", "8"].map((t, i) => <RightCell key={i} $c={GREEN}><Num size={38}>{t}</Num></RightCell>)}
            </BestQueue>
          </BestHalf>
          <BestHalf>
            <BestTop>
              <span><Fit w={34} s={33}>买</Fit><Num size={38}>1</Num></span>
              <Push $x={41}><Fit w={75} s={38} c={RED}>6.60</Fit></Push>
              <RightCell><Num size={38}>356</Num></RightCell>
            </BestTop>
            <BestQueue>
              {["5", "5", "46", "16"].map((t, i) => <RightCell key={i} $c={RED}><Num size={38}>{t}</Num></RightCell>)}
            </BestQueue>
          </BestHalf>
        </Best>

        <Bottom>
          <BottomItems>
            <Sector>
              <Caret w={21} h={7} c="#77777b" up />
              <SectorPrice><Fit w={130} s={41} c={RED}>1230.19</Fit></SectorPrice>
              <SectorName><Fit w={149} s={30}>房地产服务</Fit><Fit w={94} s={37} c={RED}>2.15%</Fit></SectorName>
            </Sector>
            <NavItem>
              <svg width="66" height="62" viewBox="-33 -31 66 62" fill="none" stroke={GREY} strokeWidth="3">
                <path d="M-15 -22.500A27 27 0 0 1 27 8L32.500 5M27 14L28.500 8.500M-24 -14L-32 -10.500M-24 -14A27 27 0 0 0 17 21" />
                <path d="M-9.500 -13.500L0 -3L9.500 -13.500M0 -3V15M-10.500 -3H10.500M-10.500 6H10.500" />
              </svg>
              <Fit w={68} s={35}>交易</Fit>
            </NavItem>
            <NavItem>
              <svg width="60" height="62" viewBox="-30 -31 60 62" fill="none" stroke={GREY} strokeWidth="3">
                <path d="M9 -26H-19Q-26 -26 -26 -19V19Q-26 26 -19 26H19Q26 26 26 19V-13" />
                <path d="M-6.500 7L16 -18" strokeWidth="6" strokeLinecap="round" />
                <path d="M20 -22L24 -26" strokeWidth="6" strokeLinecap="round" />
              </svg>
              <Fit w={68} s={35}>发帖</Fit>
            </NavItem>
            <NavItem>
              <svg width="60" height="62" viewBox="-30 -31 60 62" fill="none" stroke={GREY} strokeWidth="3" strokeLinejoin="round">
                <rect x="-25" y="-24" width="22" height="22" rx="4" />
                <path d="M12.500 -25.500L24.500 -13L12.500 -0.500L1.500 -13Z" />
                <rect x="-25" y="3" width="22" height="22" rx="4" />
                <rect x="2" y="3" width="22" height="22" rx="4" />
              </svg>
              <Fit w={69} s={35}>功能</Fit>
            </NavItem>
            <NavItem>
              <svg width="60" height="62" viewBox="-30 -31 60 62" fill="none" stroke={GREY} strokeWidth="3">
                <circle r="26.500" />
                {[-12, 0, 12].map((x) => <circle key={x} cx={x} r="3" fill={GREY} stroke="none" />)}
              </svg>
              <Fit w={105} s={35}>设自选</Fit>
            </NavItem>
          </BottomItems>
          <HomeBar />
        </Bottom>
      </Page>
    </>
  );
}
